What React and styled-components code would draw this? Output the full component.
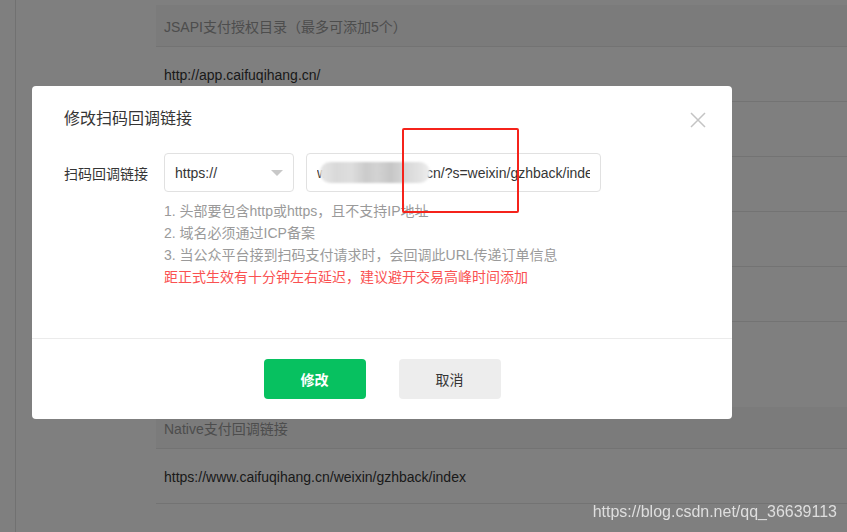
import React from "react";
import styled, { createGlobalStyle } from "styled-components";

const GlobalStyle = createGlobalStyle`
  html, body {
    margin: 0;
    padding: 0;
    background: #fff;
  }
  body {
    font-family: "Liberation Sans", "Noto Sans CJK SC", sans-serif;
    font-size: 14px;
    color: #353535;
  }
`;

const Page = styled.div`
  display: flex;
  min-height: 100vh;
`;

const Sidebar = styled.div`
  width: 15px;
  border-right: 1px solid #e2e2e2;
`;

const Main = styled.div`
  flex: 1;
  padding: 5px 0 0 140px;
`;

const Section = styled.div`
  margin-top: ${({ gap }) => gap || 0}px;
`;

const SectionHead = styled.div`
  height: 41px;
  display: flex;
  align-items: center;
  padding-left: 8px;
  background: #f6f6f6;
  border-bottom: 1px solid #e6e6e6;
  color: #9a9a9a;
`;

const Row = styled.div`
  height: 54px;
  display: flex;
  align-items: center;
  padding: 2px 0 0 8px;
  box-sizing: border-box;
  height: 55px;
  border-bottom: 1px solid #e6e6e6;
  color: #353535;
`;

const Overlay = styled.div`
  position: fixed;
  inset: 0;
  background: rgba(0, 0, 0, 0.5);
  padding: 86px 0 0 32px;
`;

const Modal = styled.div`
  position: relative;
  width: 700px;
  background: #fff;
  border-radius: 4px;
`;

const Body = styled.div`
  padding: 21px 32px 50px;
`;

const Title = styled.h3`
  margin: 0;
  font-size: 16px;
  font-weight: normal;
  line-height: 24px;
  color: #353535;
`;

const Close = styled.button`
  position: absolute;
  top: 26px;
  right: 26px;
  width: 16px;
  height: 16px;
  padding: 0;
  border: 0;
  background: none;
  display: flex;
`;

const FormRow = styled.div`
  display: flex;
  align-items: center;
  margin-top: 22px;
`;

const Label = styled.label`
  width: 100px;
  color: #353535;
`;

const Select = styled.div`
  width: 130px;
  height: 39px;
  box-sizing: border-box;
  border: 1px solid #e1e1e1;
  border-radius: 4px;
  display: flex;
  align-items: center;
  justify-content: space-between;
  padding: 0 10px 0 10px;
  color: #353535;
`;

const InputWrap = styled.div`
  position: relative;
  margin-left: 12px;
  width: 295px;
  height: 39px;
`;

const Input = styled.input`
  width: 100%;
  height: 100%;
  box-sizing: border-box;
  border: 1px solid #e1e1e1;
  border-radius: 4px;
  padding: 0 10px;
  font: inherit;
  font-size: 14px;
  color: #353535;
  outline: none;
`;

const Mosaic = styled.span`
  position: absolute;
  left: 14px;
  top: 9px;
  width: 110px;
  height: 21px;
  border-radius: 11px;
  background: linear-gradient(
    90deg,
    #e6e6e6 0%,
    #d9d9d9 15%,
    #dedede 28%,
    #cbcbcb 42%,
    #d3d3d3 52%,
    #c6c6c6 64%,
    #d8d8d8 78%,
    #e4e4e4 92%,
    #eeeeee 100%
  );
  filter: blur(1px);
`;

const Hints = styled.div`
  margin: 8px 0 0 100px;
  line-height: 22px;
`;

const Hint = styled.div`
  color: ${({ warn }) => (warn ? "#fa5151" : "#9a9a9a")};
`;

const Footer = styled.div`
  border-top: 1px solid #ebebeb;
  height: 80px;
  display: flex;
  align-items: center;
  justify-content: center;
  gap: 33px;
`;

const Button = styled.button`
  width: 102px;
  height: 40px;
  border: 0;
  border-radius: 4px;
  font: inherit;
  font-size: 14px;
  background: ${({ primary }) => (primary ? "#07c160" : "#ededed")};
  color: ${({ primary }) => (primary ? "#fff" : "#353535")};
  font-weight: ${({ primary }) => (primary ? "bold" : "normal")};
`;

const Annotation = styled.div`
  position: absolute;
  left: 370px;
  top: 42px;
  width: 117px;
  height: 85px;
  box-sizing: border-box;
  border: 2.5px solid #f5231b;
  border-radius: 2px;
  pointer-events: none;
`;

const Watermark = styled.div`
  position: fixed;
  right: 10px;
  bottom: 11px;
  font-size: 16px;
  line-height: 18px;
  color: #dedede;
`;

export default function App() {
  return (
    <>
      <GlobalStyle />
      <Page>
        <Sidebar />
        <Main>
          <Section>
            <SectionHead>JSAPI支付授权目录（最多可添加5个）</SectionHead>
            <Row>http://app.caifuqihang.cn/</Row>
            <Row />
            <Row />
            <Row />
            <Row />
          </Section>
          <Section gap={85}>
            <SectionHead>Native支付回调链接</SectionHead>
            <Row>https://www.caifuqihang.cn/weixin/gzhback/index</Row>
          </Section>
        </Main>
      </Page>
      <Overlay>
        <Modal>
          <Close aria-label="关闭">
            <svg width="16" height="16" viewBox="0 0 16 16">
              <path
                d="M1 1L15 15M15 1L1 15"
                stroke="#c4c4c4"
                strokeWidth="1.5"
                fill="none"
              />
            </svg>
          </Close>
          <Body>
            <Title>修改扫码回调链接</Title>
            <FormRow>
              <Label>扫码回调链接</Label>
              <Select>
                <span>https://</span>
                <svg width="12" height="6" viewBox="0 0 12 6">
                  <path d="M0 0H12L6 6Z" fill="#c8c8c8" />
                </svg>
              </Select>
              <InputWrap>
                <Input
                  readOnly
                  defaultValue="www.caifuqihang.cn/?s=weixin/gzhback/index"
                />
                <Mosaic />
              </InputWrap>
            </FormRow>
            <Hints>
              <Hint>1. 头部要包含http或https，且不支持IP地址</Hint>
              <Hint>2. 域名必须通过ICP备案</Hint>
              <Hint>3. 当公众平台接到扫码支付请求时，会回调此URL传递订单信息</Hint>
              <Hint warn>距正式生效有十分钟左右延迟，建议避开交易高峰时间添加</Hint>
            </Hints>
          </Body>
          <Footer>
            <Button primary>修改</Button>
            <Button>取消</Button>
          </Footer>
          <Annotation />
        </Modal>
      </Overlay>
      <Watermark>https://blog.csdn.net/qq_36639113</Watermark>
    </>
  );
}
